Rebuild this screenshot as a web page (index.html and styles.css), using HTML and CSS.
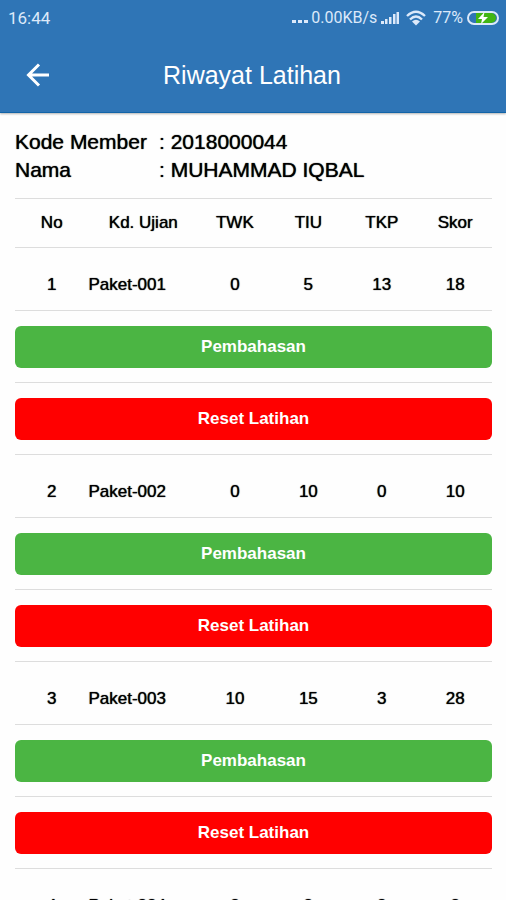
FILE: index.html
```html
<!DOCTYPE html>
<html lang="id">
<head>
<meta charset="utf-8">
<meta name="viewport" content="width=device-width, initial-scale=1">
<title>Riwayat Latihan</title>
<link rel="stylesheet" href="styles.css">
</head>
<body>
<div class="app">
  <header class="top">
    <div class="status">
      <span class="clock">16:44</span>
      <div class="indicators">
        <svg width="16" height="16" viewBox="0 0 16 16" fill="currentColor" aria-hidden="true"><path d="M0 10h4v3H0zM6 10h4v3H6zM12 10h4v3h-4z"/></svg>
        <span class="speed">0.00KB/s</span>
        <svg class="signal" width="18" height="14" viewBox="0 0 18 14" fill="currentColor" aria-hidden="true"><path d="M0 10h3v3H0zM4 8h2.500v5H4zM8 6h2.500v7H8zM12 3h2.500v10H12zM15.500 1H18v12h-2.500z"/></svg>
        <svg class="wifi" width="20" height="16" viewBox="0 0 20 16" fill="none" stroke="currentColor" stroke-width="2.400" aria-hidden="true"><path d="M1 6Q10-2.500 19 6M4 9.500Q10 3.500 16 9.500"/><path d="M6 11.500Q10 8 14 11.500L10 15.500z" fill="currentColor" stroke="none"/></svg>
        <span class="percent">77%</span>
        <svg class="battery" width="32" height="14" viewBox="0 0 32 14" aria-hidden="true"><path d="M9 2h15a5 5 0 0 1 0 10H9z" fill="#42b613"/><rect x="1" y="1" width="30" height="12" rx="6" fill="none" stroke="currentColor" stroke-width="2"/><path d="M17.500 1l-6.500 7h4l-1 5 7-7h-4.500z" fill="#fff"/></svg>
      </div>
    </div>
    <div class="toolbar">
      <button class="back" type="button" aria-label="Kembali">
        <svg width="24" height="24" viewBox="0 0 24 24" fill="none" stroke="currentColor" stroke-width="3" aria-hidden="true"><path d="M23 12H2M13 1.500L2.500 12 13 22.500"/></svg>
      </button>
      <h1>Riwayat Latihan</h1>
    </div>
  </header>
  <main>
    <dl class="member">
      <dt>Kode Member</dt><dd>: 2018000044</dd>
      <dt>Nama</dt><dd>: MUHAMMAD IQBAL</dd>
    </dl>
    <table>
      <colgroup><col><col class="code"><col><col><col><col></colgroup>
      <thead>
        <tr><th>No</th><th>Kd. Ujian</th><th>TWK</th><th>TIU</th><th>TKP</th><th>Skor</th></tr>
      </thead>
      <tbody>
        <tr class="result"><td>1</td><td class="name">Paket-001</td><td>0</td><td>5</td><td>13</td><td>18</td></tr>
        <tr class="action"><td colspan="6"><button class="btn review" type="button">Pembahasan</button></td></tr>
        <tr class="action"><td colspan="6"><button class="btn reset" type="button">Reset Latihan</button></td></tr>
      </tbody>
      <tbody>
        <tr class="result"><td>2</td><td class="name">Paket-002</td><td>0</td><td>10</td><td>0</td><td>10</td></tr>
        <tr class="action"><td colspan="6"><button class="btn review" type="button">Pembahasan</button></td></tr>
        <tr class="action"><td colspan="6"><button class="btn reset" type="button">Reset Latihan</button></td></tr>
      </tbody>
      <tbody>
        <tr class="result"><td>3</td><td class="name">Paket-003</td><td>10</td><td>15</td><td>3</td><td>28</td></tr>
        <tr class="action"><td colspan="6"><button class="btn review" type="button">Pembahasan</button></td></tr>
        <tr class="action"><td colspan="6"><button class="btn reset" type="button">Reset Latihan</button></td></tr>
      </tbody>
      <tbody>
        <tr class="result"><td>4</td><td class="name">Paket-004</td><td>0</td><td>0</td><td>0</td><td>0</td></tr>
      </tbody>
    </table>
  </main>
</div>
</body>
</html>
```
FILE: styles.css
```css
* { box-sizing: border-box; }
body {
  margin: 0;
  background: #fefefe;
  color: #000;
  font-family: "Liberation Sans", Arial, sans-serif;
}
.app { display: flex; flex-direction: column; height: 100vh; }
.top {
  flex: none;
  background: #2f75b6;
  color: #fff;
  border-bottom: 1px solid #1264a8;
  box-shadow: 0 1px 2px rgba(0, 0, 0, .3);
}
.status {
  display: flex;
  justify-content: space-between;
  align-items: center;
  height: 36px;
  padding: 0 7px 0 8px;
  color: #dce9fa;
  font: 16px/36px Roboto, sans-serif;
}
.clock { font-size: 17px; }
.indicators { display: flex; align-items: center; }
.speed { margin: 0 4px 0 3px; }
.wifi { margin: 0 7px; }
.percent { margin-right: 4px; }
.toolbar {
  display: grid;
  grid-template-columns: 48px 1fr 48px;
  align-items: center;
  height: 76px;
  padding: 2px 16px 0 14px;
}
.back {
  display: grid;
  place-items: center;
  height: 48px;
  padding: 0;
  border: 0;
  background: none;
  color: inherit;
}
h1 { margin: 0; text-align: center; font-size: 25px; font-weight: 400; line-height: 32px; }
main { flex: 1; min-height: 0; overflow: auto; scrollbar-width: none; padding: 15px 14px 0 15px; }
.member {
  display: grid;
  grid-template-columns: 144px 1fr;
  margin: 0 0 14px;
  font-size: 21px;
  line-height: 28px;
  text-shadow: 0 0 1px currentColor;
  white-space: nowrap;
}
dd { margin: 0; }
table { width: 100%; table-layout: fixed; border-collapse: separate; border-spacing: 0; border-top: 1px solid #ddd; font-size: 17px; line-height: 20px; }
.code { width: 23%; }
th, td { padding: 0; border-bottom: 1px solid #ddd; text-align: center; font-weight: 400; text-shadow: 0 0 1px currentColor; }
th { height: 49px; }
.result td { height: 63px; padding-top: 12px; }
.result .name { text-align: left; }
.action td { height: 72px; }
.btn {
  display: block;
  width: 100%;
  height: 42px;
  border: 0;
  border-radius: 6px;
  color: #fff;
  font: bold 17px/20px "Liberation Sans", Arial, sans-serif;
}
.review { background: #4bb543; }
.reset { background: #f00; }
```
